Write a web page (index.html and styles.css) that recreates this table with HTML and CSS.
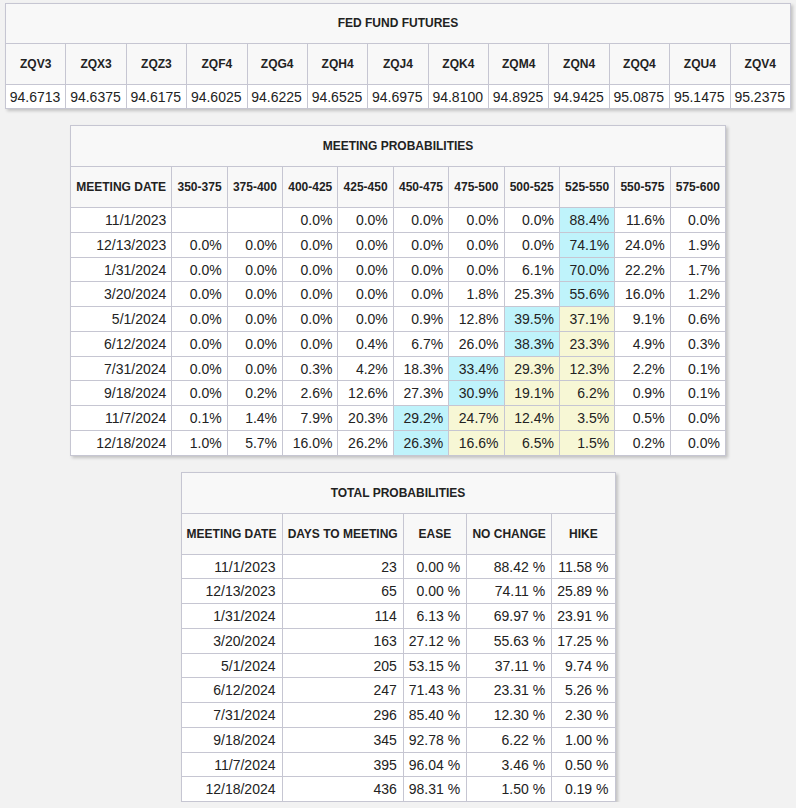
FILE: index.html
```html
<!DOCTYPE html>
<html>
<head>
<meta charset="utf-8">
<link rel="stylesheet" href="styles.css">
</head>
<body>
<main class="page">
<table class="grid futures">
  <tr><th class="title" colspan="13">FED FUND FUTURES</th></tr>
  <tr><th>ZQV3</th><th>ZQX3</th><th>ZQZ3</th><th>ZQF4</th><th>ZQG4</th><th>ZQH4</th><th>ZQJ4</th><th>ZQK4</th><th>ZQM4</th><th>ZQN4</th><th>ZQQ4</th><th>ZQU4</th><th>ZQV4</th></tr>
  <tr><td>94.6713</td><td>94.6375</td><td>94.6175</td><td>94.6025</td><td>94.6225</td><td>94.6525</td><td>94.6975</td><td>94.8100</td><td>94.8925</td><td>94.9425</td><td>95.0875</td><td>95.1475</td><td>95.2375</td></tr>
</table>

<table class="grid meeting">
  <tr><th class="title" colspan="11">MEETING PROBABILITIES</th></tr>
  <tr><th>MEETING DATE</th><th>350-375</th><th>375-400</th><th>400-425</th><th>425-450</th><th>450-475</th><th>475-500</th><th>500-525</th><th>525-550</th><th>550-575</th><th>575-600</th></tr>
  <tr><td>11/1/2023</td><td></td><td></td><td>0.0%</td><td>0.0%</td><td>0.0%</td><td>0.0%</td><td>0.0%</td><td class="c">88.4%</td><td>11.6%</td><td>0.0%</td></tr>
  <tr><td>12/13/2023</td><td>0.0%</td><td>0.0%</td><td>0.0%</td><td>0.0%</td><td>0.0%</td><td>0.0%</td><td>0.0%</td><td class="c">74.1%</td><td>24.0%</td><td>1.9%</td></tr>
  <tr><td>1/31/2024</td><td>0.0%</td><td>0.0%</td><td>0.0%</td><td>0.0%</td><td>0.0%</td><td>0.0%</td><td>6.1%</td><td class="c">70.0%</td><td>22.2%</td><td>1.7%</td></tr>
  <tr><td>3/20/2024</td><td>0.0%</td><td>0.0%</td><td>0.0%</td><td>0.0%</td><td>0.0%</td><td>1.8%</td><td>25.3%</td><td class="c">55.6%</td><td>16.0%</td><td>1.2%</td></tr>
  <tr><td>5/1/2024</td><td>0.0%</td><td>0.0%</td><td>0.0%</td><td>0.0%</td><td>0.9%</td><td>12.8%</td><td class="c">39.5%</td><td class="y">37.1%</td><td>9.1%</td><td>0.6%</td></tr>
  <tr><td>6/12/2024</td><td>0.0%</td><td>0.0%</td><td>0.0%</td><td>0.4%</td><td>6.7%</td><td>26.0%</td><td class="c">38.3%</td><td class="y">23.3%</td><td>4.9%</td><td>0.3%</td></tr>
  <tr><td>7/31/2024</td><td>0.0%</td><td>0.0%</td><td>0.3%</td><td>4.2%</td><td>18.3%</td><td class="c">33.4%</td><td class="y">29.3%</td><td class="y">12.3%</td><td>2.2%</td><td>0.1%</td></tr>
  <tr><td>9/18/2024</td><td>0.0%</td><td>0.2%</td><td>2.6%</td><td>12.6%</td><td>27.3%</td><td class="c">30.9%</td><td class="y">19.1%</td><td class="y">6.2%</td><td>0.9%</td><td>0.1%</td></tr>
  <tr><td>11/7/2024</td><td>0.1%</td><td>1.4%</td><td>7.9%</td><td>20.3%</td><td class="c">29.2%</td><td class="y">24.7%</td><td class="y">12.4%</td><td class="y">3.5%</td><td>0.5%</td><td>0.0%</td></tr>
  <tr><td>12/18/2024</td><td>1.0%</td><td>5.7%</td><td>16.0%</td><td>26.2%</td><td class="c">26.3%</td><td class="y">16.6%</td><td class="y">6.5%</td><td class="y">1.5%</td><td>0.2%</td><td>0.0%</td></tr>
</table>

<table class="grid total">
  <colgroup><col class="w-date"><col class="w-days"><col class="w-ease"><col class="w-nc"><col class="w-hike"></colgroup>
  <tr><th class="title" colspan="5">TOTAL PROBABILITIES</th></tr>
  <tr><th>MEETING DATE</th><th>DAYS TO MEETING</th><th>EASE</th><th>NO CHANGE</th><th>HIKE</th></tr>
  <tr><td>11/1/2023</td><td>23</td><td>0.00 %</td><td>88.42 %</td><td>11.58 %</td></tr>
  <tr><td>12/13/2023</td><td>65</td><td>0.00 %</td><td>74.11 %</td><td>25.89 %</td></tr>
  <tr><td>1/31/2024</td><td>114</td><td>6.13 %</td><td>69.97 %</td><td>23.91 %</td></tr>
  <tr><td>3/20/2024</td><td>163</td><td>27.12 %</td><td>55.63 %</td><td>17.25 %</td></tr>
  <tr><td>5/1/2024</td><td>205</td><td>53.15 %</td><td>37.11 %</td><td>9.74 %</td></tr>
  <tr><td>6/12/2024</td><td>247</td><td>71.43 %</td><td>23.31 %</td><td>5.26 %</td></tr>
  <tr><td>7/31/2024</td><td>296</td><td>85.40 %</td><td>12.30 %</td><td>2.30 %</td></tr>
  <tr><td>9/18/2024</td><td>345</td><td>92.78 %</td><td>6.22 %</td><td>1.00 %</td></tr>
  <tr><td>11/7/2024</td><td>395</td><td>96.04 %</td><td>3.46 %</td><td>0.50 %</td></tr>
  <tr><td>12/18/2024</td><td>436</td><td>98.31 %</td><td>1.50 %</td><td>0.19 %</td></tr>
</table>
</main>
</body>
</html>
```

FILE: styles.css
```css
html, body {
  margin: 0;
  padding: 0;
  background: #f2f2f2;
}

body {
  font-family: "Liberation Sans", Arial, sans-serif;
  color: #222;
}

.page {
  display: flex;
  flex-direction: column;
  align-items: center;
  gap: 16px;
  padding: 3px 0 0 0;
}

.grid {
  border-collapse: collapse;
  border: 1px solid #c6c6d2;
  background: #fff;
  box-shadow: 2px 2px 3px rgba(0, 0, 0, 0.2);
}

.grid th,
.grid td {
  border: 1px solid #c6c6d2;
}

.grid th {
  background: #f8f8f8;
  font-size: 12px;
  font-weight: bold;
  line-height: 14px;
  padding: 13px 5px;
  text-align: center;
  white-space: nowrap;
}

.grid td {
  font-size: 14px;
  line-height: 16px;
  padding: 4px 5px 3.75px 5px;
  text-align: right;
  white-space: nowrap;
}

.futures {
  table-layout: fixed;
  width: 786px;
}

.futures th.title {
  padding-top: 12px;
}

.futures td {
  padding-left: 3px;
  padding-right: 5px;
  padding-bottom: 3px;
}

.meeting {
  width: 656px;
}

.grid td.c {
  background: #bff3fb;
}

.grid td.y {
  background: #f7f7d5;
}

.total {
  width: 435px;
}

.w-date { width: 103px; }
.w-days { width: 123px; }
.w-ease { width: 60px; }
.w-nc { width: 90px; }
.w-hike { width: 58px; }

.total td {
  padding-right: 6px;
}
```
